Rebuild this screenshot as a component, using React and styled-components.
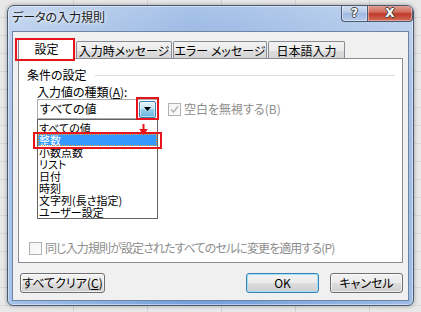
import React from 'react'
import styled, { createGlobalStyle } from 'styled-components'

const GlobalStyle = createGlobalStyle`
  html, body {
    margin: 0;
    padding: 0;
  }
  body {
    width: 421px;
    height: 312px;
    overflow: hidden;
    background-color: #e8e8e8;
    background-image:
      repeating-linear-gradient(to right, transparent 0 73px, #d2d2d2 73px 74px),
      repeating-linear-gradient(to bottom, transparent 0 17px, #d8d8d8 17px 18px);
    font-family: "Noto Sans CJK JP", "Noto Sans", sans-serif;
    font-size: 12px;
    font-feature-settings: "palt";
    line-height: 14px;
    color: #000;
  }
`

const items = ['すべての値', '整数', '小数点数', 'リスト', '日付', '時刻', '文字列(長さ指定)', 'ユーザー設定']
const tabs = ['設定', '入力時メッセージ', 'エラー メッセージ', '日本語入力']
const tabWidths = [57, 96, 94, 77]

function App() {
  return (
    <>
      <GlobalStyle />
      <Window>
        <TitleBar>
          <Title>データの入力規則</Title>
          <Controls>
            <HelpButton>?</HelpButton>
            <CloseButton>X</CloseButton>
          </Controls>
        </TitleBar>

        <Client>
          <TabRow>
            {tabs.map((t, i) => (
              <Tab key={t} $active={i === 0} $w={tabWidths[i]}>
                {t}
              </Tab>
            ))}
          </TabRow>

          <Panel>
            <GroupHeader>
              <span>条件の設定</span>
              <GroupLine />
            </GroupHeader>

            <Group>
              <FieldLabel>
                入力値の種類(<u>A</u>):
              </FieldLabel>
              <FieldRow>
                <Combo>
                  <span>すべての値</span>
                  <DropButton>
                    <svg width="7" height="4" viewBox="0 0 7 4">
                      <path d="M0 0h7L3.5 4z" fill="#000" />
                    </svg>
                  </DropButton>
                </Combo>
                <Check $disabled>
                  <Box>
                    <svg width="9" height="9" viewBox="0 0 9 9">
                      <path d="M1 4.5l2.5 2.5L8 1.5" stroke="#b8b8b8" strokeWidth="1.6" fill="none" />
                    </svg>
                  </Box>
                  空白を無視する(B)
                </Check>
              </FieldRow>
            </Group>

            <BottomCheck $disabled>
              <Box />
              同じ入力規則が設定されたすべてのセルに変更を適用する(P)
            </BottomCheck>

            <DropList>
              {items.map((it, i) => (
                <ListItem key={it} $selected={i === 1}>
                  {it}
                </ListItem>
              ))}
            </DropList>

            <Marker $left={117} $top={38} $w={23} $h={23} />
            <Marker $left={14} $top={73} $w={129} $h={17} />
            <Arrow width="9" height="12" viewBox="0 0 9 12">
              <path d="M4.5 0v6" stroke="#e8141b" strokeWidth="2" />
              <path d="M0 5h9L4.5 11z" fill="#e8141b" />
            </Arrow>
          </Panel>

          <ButtonRow>
            <Button $w={85} $ml={2}>
              すべてクリア(<u>C</u>)
            </Button>
            <Spacer />
            <Button $w={73} $default>
              OK
            </Button>
            <Button $w={73}>キャンセル</Button>
          </ButtonRow>

          <Marker $left={2} $top={6} $w={60} $h={23} />
        </Client>
      </Window>
    </>
  )
}

const Window = styled.div`
  margin: 5px 0 0 7px;
  width: 407px;
  height: 301px;
  box-sizing: border-box;
  border: 1px solid #4b5a70;
  border-radius: 7px 7px 6px 6px;
  background:
    linear-gradient(to right, rgba(255, 255, 255, 0.35), rgba(255, 255, 255, 0) 45%, rgba(255, 255, 255, 0.05) 60%, rgba(255, 255, 255, 0.3)),
    linear-gradient(to bottom, #a9c3e8, #82a8de 30%, #74a0dc 100%);
  box-shadow: 0 0 4px rgba(0, 0, 0, 0.35), inset 0 0 0 1px rgba(255, 255, 255, 0.45);
  display: flex;
  flex-direction: column;
  overflow: hidden;
`

const TitleBar = styled.div`
  height: 25px;
  display: flex;
  align-items: flex-start;
  justify-content: space-between;
`

const Title = styled.div`
  padding: 4px 0 0 4px;
  color: #1a1a1a;
  font-size: 12px;
  text-shadow: 0 0 6px rgba(255, 255, 255, 0.9), 0 0 3px rgba(255, 255, 255, 0.8);
`

const Controls = styled.div`
  display: flex;
  margin-top: -1px;
`

const CtrlButton = styled.div`
  height: 17px;
  box-sizing: border-box;
  border: 1px solid #4b5a70;
  border-top: none;
  display: flex;
  align-items: center;
  justify-content: center;
  color: #fff;
  font-family: "DejaVu Sans", sans-serif;
  font-weight: bold;
  font-size: 12px;
  text-shadow: 1px 0 0 #444, -1px 0 0 #444, 0 1px 0 #444, 0 -1px 0 #444;
  box-shadow: inset 0 0 0 1px rgba(255, 255, 255, 0.4);
`

const HelpButton = styled(CtrlButton)`
  width: 26px;
  border-right: none;
  border-bottom-left-radius: 4px;
  background: linear-gradient(to bottom, #d6e2f3, #b5c9e8 50%, #9db7e0 51%, #b9cdec);
`

const CloseButton = styled(CtrlButton)`
  width: 46px;
  border-bottom-right-radius: 4px;
  background: linear-gradient(to bottom, #e5a597, #d06b5c 45%, #c0392b 55%, #d46b55);
`

const Client = styled.div`
  position: relative;
  flex: 1;
  margin: 0 4px 4px;
  box-sizing: border-box;
  border: 1px solid #6f83a2;
  background: #f0f0f0;
  padding: 6px 5px 0;
  display: flex;
  flex-direction: column;
`

const TabRow = styled.div`
  height: 21px;
  display: flex;
  align-items: flex-end;
`

const Tab = styled.div`
  position: relative;
  z-index: ${(p) => (p.$active ? 2 : 0)};
  width: ${(p) => p.$w}px;
  height: ${(p) => (p.$active ? 21 : 18)}px;
  box-sizing: border-box;
  border: 1px solid #898c95;
  border-bottom: none;
  margin-left: ${(p) => (p.$active ? 0 : 1)}px;
  border-radius: 2px 2px 0 0;
  background: ${(p) =>
    p.$active ? '#fff' : 'linear-gradient(to bottom, #f2f2f2, #ebebeb 50%, #dddddd 51%, #d4d4d4)'};
  display: flex;
  align-items: center;
  justify-content: center;
  padding-top: ${(p) => (p.$active ? 0 : 1)}px;
  white-space: nowrap;
`

const Panel = styled.div`
  position: relative;
  z-index: 1;
  margin-top: -1px;
  height: 205px;
  box-sizing: border-box;
  border: 1px solid #898c95;
  background: #fff;
  display: flex;
  flex-direction: column;
`

const GroupHeader = styled.div`
  display: flex;
  align-items: center;
  padding: 9px 7px 0 8px;
`

const GroupLine = styled.div`
  flex: 1;
  height: 1px;
  margin-left: 8px;
  background: #d5dfe5;
`

const Group = styled.div`
  padding: 3px 0 0 18px;
  display: flex;
  flex-direction: column;
`

const FieldLabel = styled.div`
  height: 14px;
`

const FieldRow = styled.div`
  display: flex;
  align-items: center;
`

const Combo = styled.div`
  width: 121px;
  height: 20px;
  box-sizing: border-box;
  border: 1px solid #abadb3;
  background: #fff;
  display: flex;
  align-items: center;
  justify-content: space-between;
  padding: 0 1px 0 2px;
`

const DropButton = styled.div`
  width: 17px;
  height: 17px;
  box-sizing: border-box;
  border: 1px solid #3c7fb1;
  border-radius: 2px;
  background: linear-gradient(to bottom, #e5f4fc, #c4e5f6 45%, #98d1ef 50%, #68b3db);
  box-shadow: inset 0 0 0 1px rgba(255, 255, 255, 0.5);
  display: flex;
  align-items: center;
  justify-content: center;
`

const Check = styled.label`
  display: flex;
  align-items: center;
  gap: 3px;
  margin-left: 10px;
  white-space: nowrap;
  color: ${(p) => (p.$disabled ? '#8d8d8d' : '#000')};
`

const Box = styled.span`
  flex: none;
  width: 13px;
  height: 13px;
  box-sizing: border-box;
  border: 1px solid #b1b1b1;
  background: linear-gradient(135deg, #f4f4f4, #fbfbfb);
  display: flex;
  align-items: center;
  justify-content: center;
`

const BottomCheck = styled(Check)`
  margin: auto 0 7px 10px;
  letter-spacing: -0.9px;
`

const DropList = styled.div`
  position: absolute;
  left: 18px;
  top: 60px;
  width: 121px;
  box-sizing: border-box;
  border: 1px solid #646464;
  background: #fff;
  padding: 2px 0 0;
  display: flex;
  flex-direction: column;
`

const ListItem = styled.div`
  height: 12px;
  font-size: 11px;
  line-height: 12px;
  box-sizing: border-box;
  padding-left: 1px;
  white-space: nowrap;
  background: ${(p) => (p.$selected ? '#3399ff' : 'transparent')};
  color: ${(p) => (p.$selected ? '#fff' : '#000')};
  outline: ${(p) => (p.$selected ? '1px dotted #f0a040' : 'none')};
  outline-offset: -1px;
`

const Marker = styled.div`
  position: absolute;
  z-index: 5;
  left: ${(p) => p.$left}px;
  top: ${(p) => p.$top}px;
  width: ${(p) => p.$w}px;
  height: ${(p) => p.$h}px;
  box-sizing: border-box;
  border: 2px solid #e8141b;
  pointer-events: none;
`

const Arrow = styled.svg`
  position: absolute;
  z-index: 6;
  left: 120px;
  top: 65px;
`

const ButtonRow = styled.div`
  display: flex;
  gap: 11px;
  margin-top: 10px;
`

const Spacer = styled.div`
  flex: 1;
`

const Button = styled.div`
  width: ${(p) => p.$w}px;
  margin-left: ${(p) => p.$ml || 0}px;
  height: 20px;
  box-sizing: border-box;
  border: 1px solid ${(p) => (p.$default ? '#3c7fb1' : '#707070')};
  border-radius: 3px;
  background: linear-gradient(to bottom, #f2f2f2, #ebebeb 50%, #dddddd 51%, #cfcfcf);
  box-shadow: inset 0 0 0 1px ${(p) => (p.$default ? '#9fe0fb' : 'rgba(255, 255, 255, 0.6)')};
  display: flex;
  align-items: center;
  justify-content: center;
  white-space: nowrap;
`

export default App
